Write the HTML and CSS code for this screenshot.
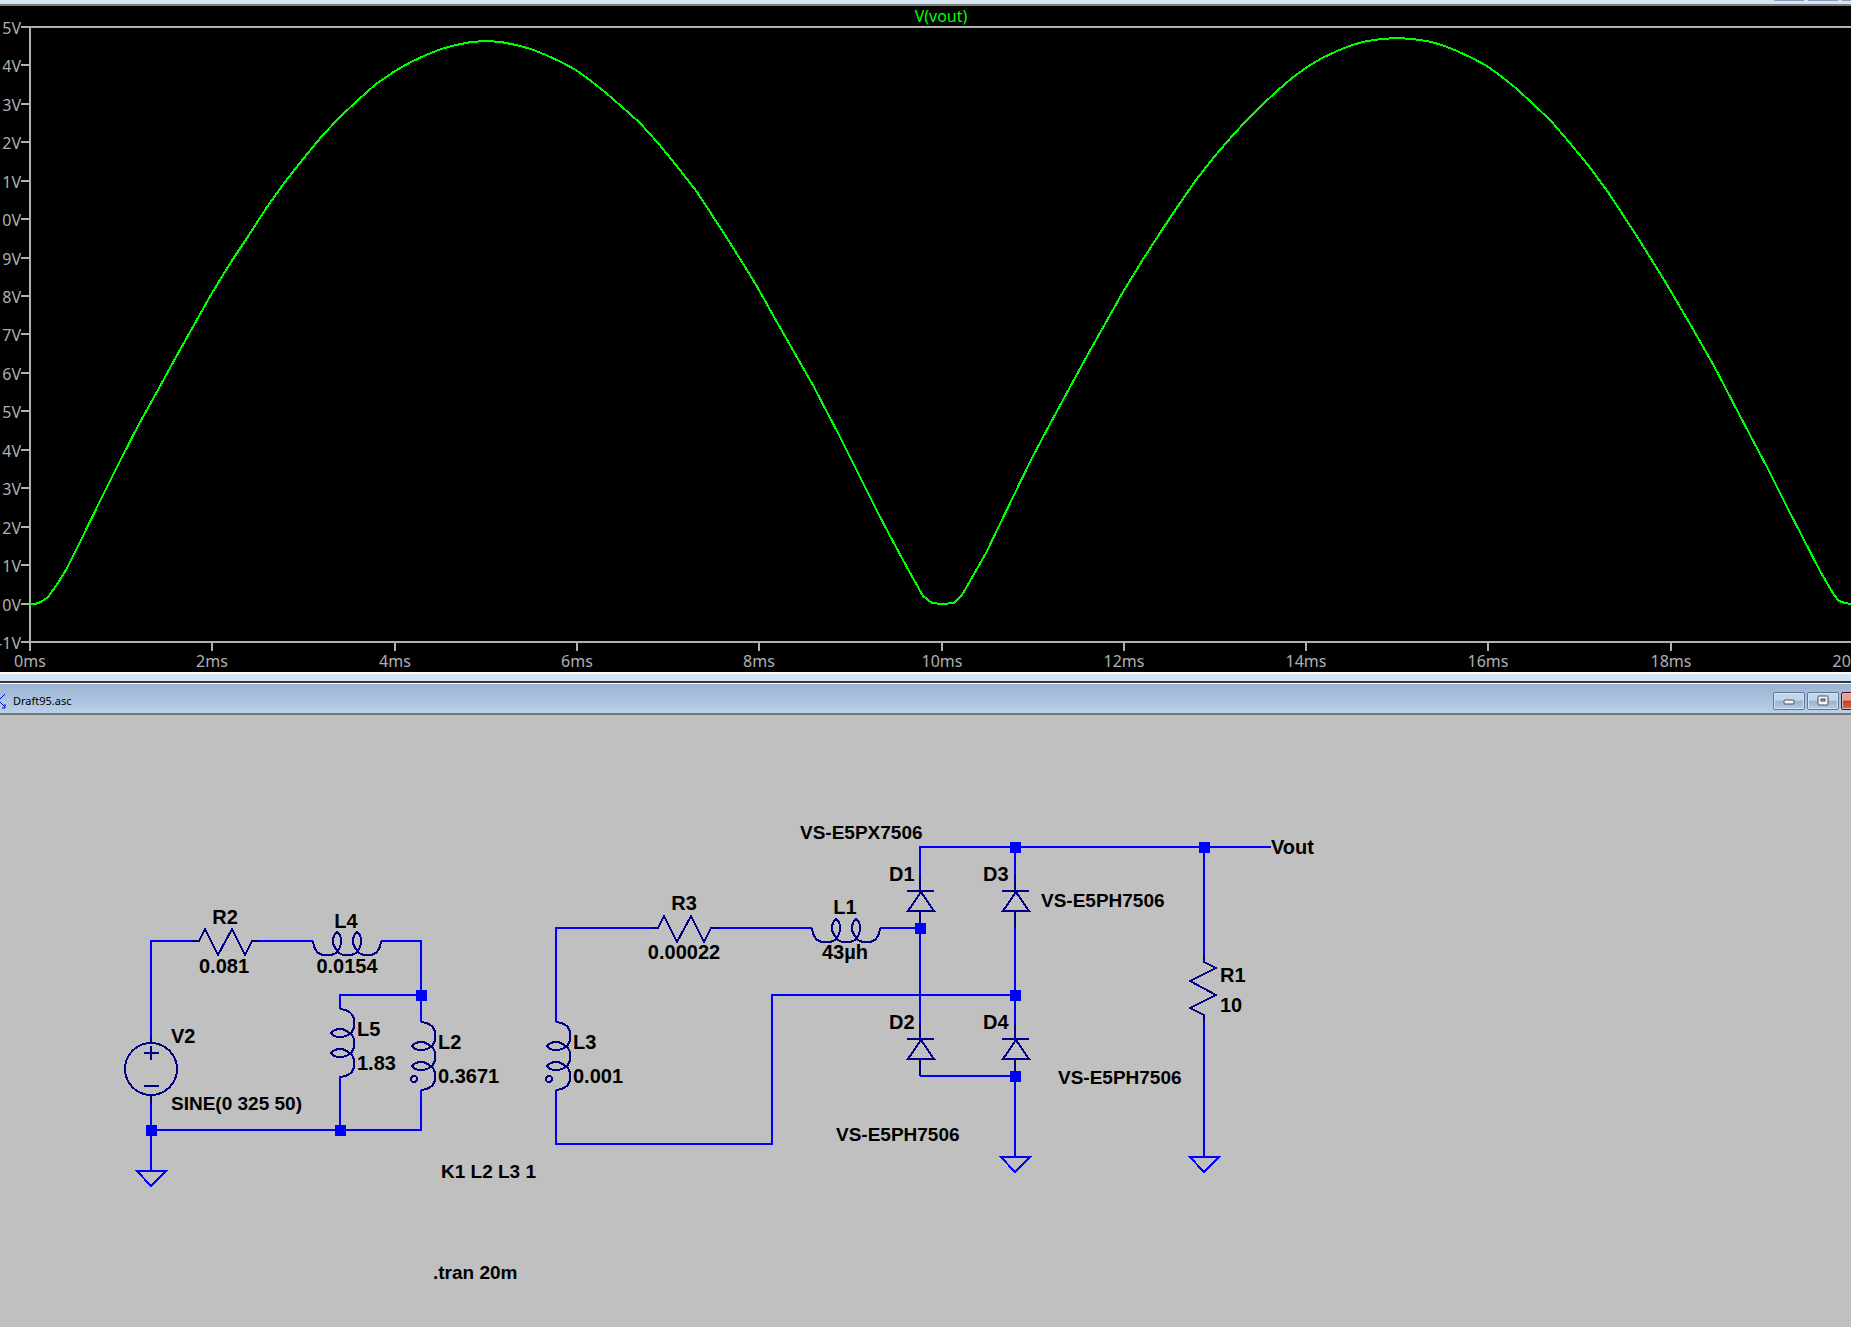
FILE: index.html
```html
<!doctype html>
<html lang="en">
<head>
<meta charset="utf-8">
<title>Draft95.asc</title>
<link rel="stylesheet" href="styles.css">
</head>

<body>
<div class="plot-bar">
	<span></span>
	<span></span>
	<span></span>
</div>
<div class="plot">
	<svg viewBox="0 6 1851 666" role="img" aria-label="V(vout)">
		<path class="axis" d="M21 27H1851M21 642H1851M30 27V651"/>
		<path class="axis" d="M21 65H30M21 104H30M21 142H30M21 181H30M21 219H30M21 258H30M21 296H30M21 334H30M21 373H30M21 411H30M21 450H30M21 488H30M21 527H30M21 565H30M21 604H30"/>
		<path class="axis" d="M212 642V651M395 642V651M577 642V651M759 642V651M942 642V651M1124 642V651M1306 642V651M1488 642V651M1671 642V651"/>
		<g class="volts">
			<text x="21" y="34">15V</text>
			<text x="21" y="72">14V</text>
			<text x="21" y="111">13V</text>
			<text x="21" y="149">12V</text>
			<text x="21" y="188">11V</text>
			<text x="21" y="226">10V</text>
			<text x="21" y="265">9V</text>
			<text x="21" y="303">8V</text>
			<text x="21" y="341">7V</text>
			<text x="21" y="380">6V</text>
			<text x="21" y="418">5V</text>
			<text x="21" y="457">4V</text>
			<text x="21" y="495">3V</text>
			<text x="21" y="534">2V</text>
			<text x="21" y="572">1V</text>
			<text x="21" y="611">0V</text>
			<text x="21" y="649">-1V</text>
		</g>
		<g class="times">
			<text x="30" y="667">0ms</text>
			<text x="212" y="667">2ms</text>
			<text x="395" y="667">4ms</text>
			<text x="577" y="667">6ms</text>
			<text x="759" y="667">8ms</text>
			<text x="942" y="667">10ms</text>
			<text x="1124" y="667">12ms</text>
			<text x="1306" y="667">14ms</text>
			<text x="1488" y="667">16ms</text>
			<text x="1671" y="667">18ms</text>
			<text x="1853" y="667">20ms</text>
		</g>
		<text class="trace-name" x="941" y="22">V(vout)</text>
		<polyline class="trace" points="30,604 35,604 41,602 48,597 56,586 66,570 81,540 103,495 121,459 139,424 158,390 176,357 194,325 212,293 231,262 249,235 267,207 285,182 303,159 322,136 340,117 358,100 376,84 395,71 411,62 426,55 441,49 456,45 471,42 486,41 501,42 516,45 531,49 546,55 561,62 576,70 591,81 606,93 621,106 640,123 658,143 676,165 697,192 727,238 755,283 778,324 802,366 814,387 828,414 838,433 855,467 877,511 889,534 909,571 923,596 932,603 942,604 954,603 962,595 970,581 986,553 1000,524 1014,495 1032,458 1050,424 1069,389 1087,356 1105,324 1123,292 1142,261 1160,233 1178,206 1196,180 1214,157 1233,135 1247,120 1262,105 1277,91 1292,78 1307,67 1322,58 1337,51 1352,45 1367,41 1382,39 1397,38 1412,39 1427,41 1442,45 1457,51 1472,58 1487,66 1502,77 1517,89 1532,103 1551,121 1569,142 1588,165 1608,192 1638,238 1666,283 1690,324 1714,366 1725,387 1739,414 1749,433 1767,467 1789,511 1801,534 1820,571 1834,595 1839,601 1845,603 1851,604"/>
	</svg>
</div>

<div class="split"></div>
<div class="title-bar">
	<svg class="app-icon" width="7" height="18" viewBox="0 0 7 18"><path d="M5 2L0 7M0 10L5 15M5 12V16H2"/></svg>
	<h1>Draft95.asc</h1>
	<div class="controls">
		<button aria-label="Minimize"><svg width="12" height="12"><rect x="1" y="5" width="10" height="4" rx="1"/></svg></button>
		<button aria-label="Maximize"><svg width="12" height="12"><rect x="1" y="1" width="10" height="9" rx="1"/><rect class="hole" x="4" y="4" width="4" height="2"/></svg></button>
		<button class="close" aria-label="Close"></button>
	</div>
</div>

<div class="schematic">
	<svg viewBox="0 715 1851 612" role="img" aria-label="Schematic">
		<defs>
			<path id="res" d="M0 0H7L13 -12L26 14L40 -12L53 14L60 0H67"/>
			<path id="coil" d="M0 0C1 9 5 14 12 14H16C22 14 24 11 26 8C28 5 28 2 28 0C28 -5 26 -8 24 -9C22 -8 20 -4 20 0C20 3 21 6 23 8C25 11 27 14 32 14H36C42 14 44 11 46 8C48 5 48 2 48 0C48 -5 46 -8 44 -9C42 -8 40 -4 40 0C40 3 41 6 43 8C45 11 47 14 53 14H56C63 14 67 9 68 0"/>
			<path id="diode" d="M0 0V16M-13 16H14M0 36V53M1 17L-12 36H14Z"/>
			<path id="gnd" d="M-14 0H15L0 15Z"/>
			<rect id="node" width="11" height="11"/>
		</defs>

		<!-- wires -->
		<g class="wire">
			<path d="M151 1038V941H192M259 941H313M381 941H421V1022M421 995H340V1009M340 1076V1130M421 1090V1130H151M151 1102V1171"/>
			<path d="M556 1022V928H651M718 928H812M880 928H920M556 1090V1144H772V995H1015"/>
			<path d="M920 875V847H1271M920 928V1023M920 1076H1015M1015 847V875M1015 928V1023M1015 1076V1157M1204 847V955M1204 1022V1157"/>
			<use href="#gnd" x="151" y="1171"/>
			<use href="#gnd" x="1015" y="1157"/>
			<use href="#gnd" x="1204" y="1157"/>
		</g>

		<!-- parts -->
		<g class="part">
			<use href="#res" x="192" y="941"/>
			<use href="#res" x="651" y="928"/>
			<use href="#res" transform="translate(1204 955) rotate(90)"/>
			<use href="#coil" x="313" y="941"/>
			<use href="#coil" x="812" y="928"/>
			<use href="#coil" transform="matrix(0 1 1 0 340 1009)"/>
			<use href="#coil" transform="matrix(0 1 1 0 421 1022)"/>
			<use href="#coil" transform="matrix(0 1 1 0 556 1022)"/>
			<use href="#diode" x="920" y="875"/>
			<use href="#diode" x="1015" y="875"/>
			<use href="#diode" x="920" y="1023"/>
			<use href="#diode" x="1015" y="1023"/>
			<circle cx="151" cy="1069" r="26"/>
			<path d="M151 1037V1043M151 1095V1103M144 1053H159M151 1046V1060M144 1086H159"/>
			<circle cx="414" cy="1079" r="3"/>
			<circle cx="549" cy="1079" r="3"/>
		</g>

		<g class="node">
			<use href="#node" x="146" y="1125"/>
			<use href="#node" x="335" y="1125"/>
			<use href="#node" x="416" y="990"/>
			<use href="#node" x="915" y="923"/>
			<use href="#node" x="1010" y="842"/>
			<use href="#node" x="1010" y="990"/>
			<use href="#node" x="1010" y="1071"/>
			<use href="#node" x="1199" y="842"/>
		</g>

		<g class="label">
			<text x="171" y="1043">V2</text>
			<text x="357" y="1036">L5</text>
			<text x="357" y="1070">1.83</text>
			<text x="438" y="1049">L2</text>
			<text x="438" y="1083">0.3671</text>
			<text x="573" y="1049">L3</text>
			<text x="573" y="1083">0.001</text>
			<text x="889" y="881">D1</text>
			<text x="889" y="1029">D2</text>
			<text x="983" y="881">D3</text>
			<text x="983" y="1029">D4</text>
			<text x="1220" y="982">R1</text>
			<text x="1220" y="1012">10</text>
			<text x="1271" y="854">Vout</text>
		</g>
		<g class="label mid">
			<text x="225" y="924">R2</text>
			<text x="224" y="973">0.081</text>
			<text x="346" y="928">L4</text>
			<text x="347" y="973">0.0154</text>
			<text x="684" y="910">R3</text>
			<text x="684" y="959">0.00022</text>
			<text x="845" y="914">L1</text>
			<text x="845" y="959">43µh</text>
		</g>
		<g class="label model">
			<text x="171" y="1110">SINE(0 325 50)</text>
			<text x="800" y="839">VS-E5PX7506</text>
			<text x="1041" y="907">VS-E5PH7506</text>
			<text x="1058" y="1084">VS-E5PH7506</text>
			<text x="836" y="1141">VS-E5PH7506</text>
			<text x="441" y="1178">K1 L2 L3 1</text>
			<text x="433" y="1279">.tran 20m</text>
		</g>
	</svg>
</div>
</body>
</html>
```
FILE: styles.css
```css
*{margin:0; padding:0; box-sizing:border-box;}
body{background:#c0c0c0; overflow:hidden;}
svg{display:block;}

.plot-bar{height:6px; display:flex; justify-content:flex-end; gap:4px; background:#d7e4f2; border-bottom:2px solid #7c7c7c;}
.plot-bar span{width:30px; height:1px; background:#8c98bc;}
.plot-bar span:last-child{width:9px;}

.plot{background:#000; font-family:"Noto Sans","Open Sans",sans-serif; font-size:16px;}
.plot svg{width:100%; height:auto;}
.plot text{fill:#b0b0b0;}
.axis{fill:none; stroke:#b0b0b0; stroke-width:2; shape-rendering:crispEdges;}
.volts{text-anchor:end;}
.times{text-anchor:middle;}
.plot .trace-name{fill:#00ff00; text-anchor:middle;}
.trace{fill:none; stroke:#00ff00; stroke-width:2; shape-rendering:crispEdges;}

.split{height:12px; background:#d7e4f2; border-top:2px solid #fafafa; border-bottom:1px solid #fff; box-shadow:inset 0 -2px 0 #383838;}

.title-bar{height:31px; padding-top:4px; display:flex; align-items:center; background:linear-gradient(#99b4d1,#b9d1ea); border-bottom:2px solid #777; overflow:hidden;}
.title-bar h1{flex:1; margin-left:6px; font:11px/18px "Noto Sans","Open Sans",sans-serif; color:#000;}
.app-icon{flex:none;}
.app-icon path{fill:none; stroke:#0000e0; stroke-width:1;}
.controls{display:flex; gap:2px; margin-right:-22px;}
.controls button{width:32px; height:18px; display:flex; align-items:center; justify-content:center; border:1px solid #5f7694; border-radius:2px; background:linear-gradient(#c3d5e8 45%,#98b3d0 50%,#b4cde6); box-shadow:inset 0 0 0 1px #d5e3f2;}
.controls rect{fill:#f4f4f4; stroke:#4b4f60; stroke-width:1;}
.controls .hole{fill:#8fabc9;}
.controls .close{border-color:#4a1216; background:linear-gradient(#e5a092 45%,#b8402c 50%,#d06a50); box-shadow:inset 0 0 0 1px #e8b4a8;}

.schematic svg{width:100%; height:auto;}
.wire{fill:none; stroke:#0000ff; stroke-width:2; shape-rendering:crispEdges;}
.part{fill:none; stroke:#000084; stroke-width:2; shape-rendering:crispEdges;}
.node{fill:#0000ff;}
.label{font:bold 20px "Liberation Sans",Arial,sans-serif; fill:#000;}
.mid{text-anchor:middle;}
.model{font-size:19px;}
```
